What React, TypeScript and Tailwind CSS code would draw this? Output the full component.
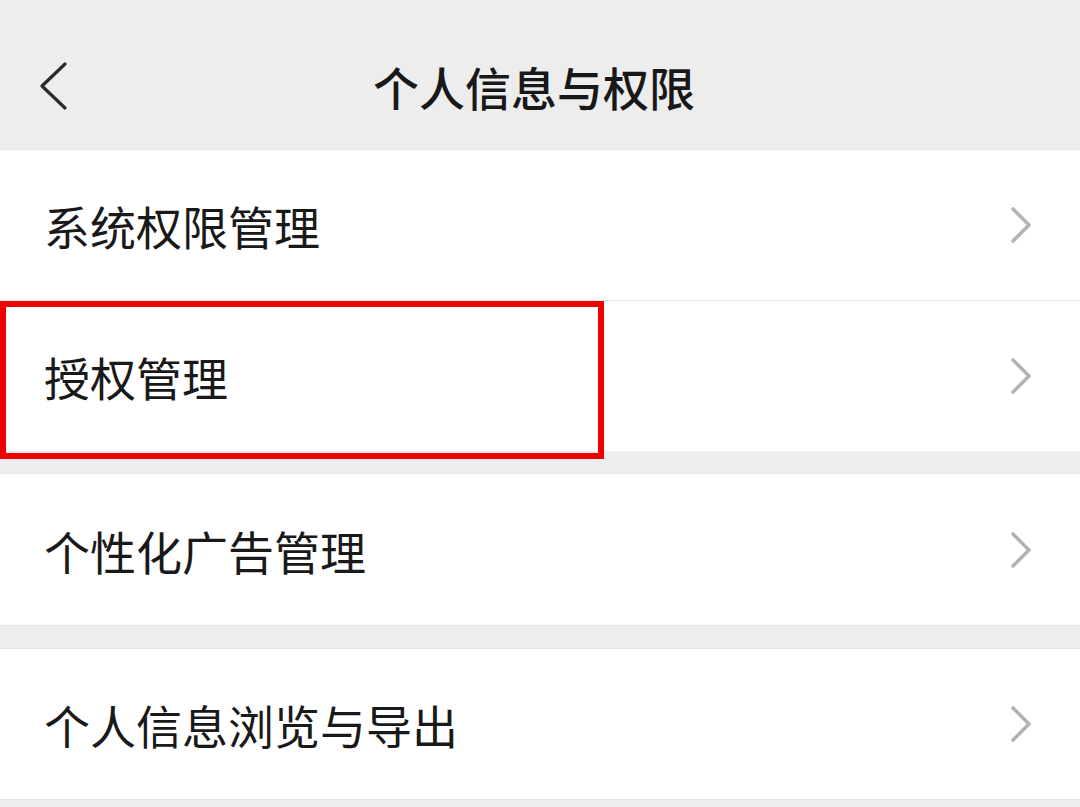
import React from "react";

function RightChevron() {
  return (
    <svg width="20" height="36" viewBox="0 0 20 36" fill="none" className="shrink-0">
      <path d="M2 2 L18 18 L2 34" stroke="#b3b3b3" strokeWidth="3.6" strokeLinecap="round" strokeLinejoin="round" />
    </svg>
  );
}

function Row({ label, tall, children }: { label: string; tall?: boolean; children?: React.ReactNode }) {
  return (
    <div className={`relative flex items-center justify-between bg-white pl-[44px] pr-[49px] ${tall ? "h-[151px]" : "h-[150px]"}`}>
      <span className="text-[46px] leading-none text-[#191919]">{label}</span>
      <RightChevron />
      {children}
    </div>
  );
}

export default function App() {
  return (
    <div className="flex h-[807px] w-[1080px] flex-col bg-[#ededed] font-['Noto_Sans_CJK_SC','Noto_Sans',sans-serif]">
      <header className="grid h-[150px] shrink-0 grid-cols-[1fr_auto_1fr] items-center border-b border-[#e4e4e4] bg-[#ededed] pt-[22px]">
        <div className="pl-[39px]">
          <svg width="28" height="48" viewBox="0 0 28 48" fill="none">
            <path d="M26 2 L3 24 L26 46" stroke="#2b2b2b" strokeWidth="3.2" strokeLinecap="round" strokeLinejoin="round" />
          </svg>
        </div>
        <h1 className="pr-[12px] text-[46px] font-medium leading-none text-[#181818]">个人信息与权限</h1>
        <div />
      </header>

      <section className="bg-white">
        <Row label="系统权限管理" />
        <div className="h-px bg-[#e5e5e5]" />
        <Row label="授权管理">
          <div className="pointer-events-none absolute left-0 top-0 z-10 h-[158px] w-[604px] border-[6px] border-[#f00000]" />
        </Row>
      </section>

      <div className="h-[23px] shrink-0 border-b border-[#e4e4e4]" />
      <section className="bg-white">
        <Row label="个性化广告管理" tall />
      </section>

      <div className="h-[24px] shrink-0 border-t border-b border-[#e4e4e4]" />
      <section className="bg-white">
        <Row label="个人信息浏览与导出" />
      </section>
      <div className="flex-1 border-t border-[#e4e4e4]" />
    </div>
  );
}
